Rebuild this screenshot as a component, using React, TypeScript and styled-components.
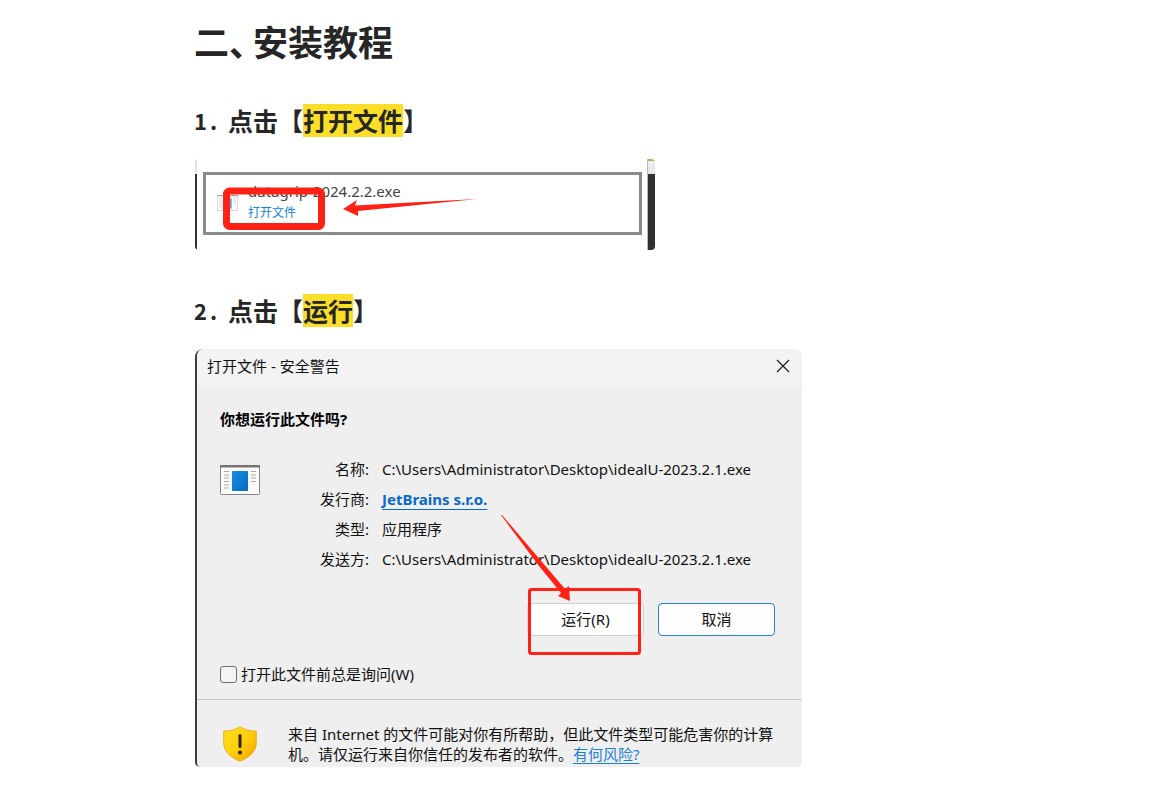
import React from "react";
import styled, { createGlobalStyle } from "styled-components";

const GlobalStyle = createGlobalStyle`
  *, *::before, *::after { box-sizing: border-box; }
  body {
    margin: 0;
    background: #fff;
    color: #262626;
    font-family: "Noto Sans CJK SC", sans-serif;
  }
`;

const uiFont = `"Noto Sans", "Noto Sans CJK SC", sans-serif`;
const red = "#ff2115";

const Article = styled.main`
  max-width: 773px;
  margin: 0 auto;
  padding: 20px 0 28px;
`;

const Title = styled.h1`
  display: flex;
  margin: 0 0 43px;
  font-size: 35px;
  line-height: 41px;
  font-weight: 700;
`;

const TitleMark = styled.span`
  width: 24px;
  font-feature-settings: "halt";
`;

const Step = styled.h2`
  display: flex;
  margin: 0 0 22px;
  font-size: 25px;
  line-height: 33px;
  font-weight: 700;
`;

const StepNumber = styled.span`
  display: flex;
  gap: 3px;
  width: 34px;
  font-size: 22px;
`;

const Highlight = styled.mark`
  display: inline-block;
  color: inherit;
  background: #fbde28;
`;

const Figure = styled.figure`
  margin: 0 0 44px;
  padding-left: 1px;

  &:last-child {
    margin-bottom: 0;
  }
`;

const Overlay = styled.svg`
  position: absolute;
  overflow: visible;
  pointer-events: none;
`;

const Download = styled.div`
  display: flex;
  justify-content: space-between;
  max-width: 460px;
  height: 91px;
  border-radius: 4px;
  overflow: hidden;
`;

const Edge = styled.div<{ $wide?: boolean }>`
  flex: none;
  width: ${(p) => (p.$wide ? 8 : 2)}px;
  background: linear-gradient(${(p) => (p.$wide ? "#c9a94e 2px, #eee 2px" : "#ddd 0")}, #e4e4e4 15px, #303030 15px);
  border-left: ${(p) => (p.$wide ? "1px solid #bbb" : "0")};
`;

const DownloadItem = styled.div`
  position: relative;
  flex: 1;
  display: flex;
  gap: 10px;
  margin: 13px 5px 15px 6px;
  padding: 6px 11px;
  border: 3px solid #8a8a8a;
`;

const FileIconBox = styled.div`
  flex: none;
  width: 21px;
  padding-top: 14px;
  line-height: 0;
`;

const FileText = styled.div`
  display: flex;
  flex-direction: column;
  align-items: flex-start;
  gap: 2px;
  font-family: ${uiFont};
`;

const FileName = styled.span`
  font-size: 15px;
  line-height: 20px;
  color: #444;
`;

const OpenLink = styled.a`
  font-size: 12px;
  line-height: 20px;
  color: #1583d8;
  text-decoration: none;
`;

const Dialog = styled.section`
  max-width: 607px;
  border-left: 2px solid #3c3c3c;
  border-radius: 8px 8px 5px 5px;
  background: #efefef;
  color: #111;
  overflow: hidden;
  font-family: ${uiFont};
  font-size: 15px;
  line-height: 20px;
`;

const TitleBar = styled.header`
  display: flex;
  align-items: center;
  justify-content: space-between;
  height: 37px;
  padding: 0 12px 4px 10px;
  background: #f3f3f3;
`;

const CloseButton = styled.button`
  padding: 0;
  border: 0;
  background: none;
  width: 14px;
  height: 14px;
  line-height: 0;
`;

const DialogBody = styled.div`
  padding: 23px 27px 15px 23px;
`;

const Question = styled.p`
  margin: 0 0 25px;
  font-weight: 700;
  color: #000;
`;

const Info = styled.div`
  display: flex;
  align-items: flex-start;
`;

const AppIconBox = styled.div`
  flex: none;
  width: 100px;
  padding-top: 11px;
  line-height: 0;
`;

const Details = styled.dl`
  display: grid;
  grid-template-columns: 49px 1fr;
  column-gap: 13px;
  row-gap: 10px;
  margin: 0;
  padding-top: 5px;
`;

const Term = styled.dt`
  text-align: right;
  white-space: nowrap;
`;

const Value = styled.dd`
  margin: 0;
`;

const Publisher = styled.a`
  font-weight: 700;
  color: #0a68c8;
  text-decoration: underline;
  text-decoration-thickness: 1px;
  text-underline-offset: 4px;
`;

const Actions = styled.div`
  display: flex;
  justify-content: flex-end;
  gap: 14px;
  margin: 34px 0 28px;
`;

const ActionSlot = styled.div`
  position: relative;
`;

const ActionButton = styled.button<{ $primary?: boolean }>`
  width: 117px;
  height: 33px;
  padding: 0 0 2px;
  border: 1px solid ${(p) => (p.$primary ? "#2484cc" : "#d2d2d2")};
  border-radius: 4px;
  background: #fdfdfd;
  color: #111;
  font: inherit;
`;

const AskLabel = styled.label`
  display: flex;
  align-items: center;
  gap: 4px;
`;

const Checkbox = styled.input`
  appearance: none;
  width: 17px;
  height: 17px;
  margin: 0;
  border: 1px solid #6f6f6f;
  border-radius: 3px;
  background: #f4f4f4;
`;

const Warning = styled.footer`
  display: flex;
  gap: 31px;
  padding: 24px 20px 3px 26px;
  border-top: 1px solid #c6c6c6;
`;

const ShieldBox = styled.div`
  flex: none;
  width: 34px;
  padding-top: 2px;
  line-height: 0;
`;

const WarningText = styled.p`
  margin: 0;
`;

const RiskLink = styled.a`
  color: #1b7fd6;
  text-underline-offset: 3px;
`;

function AppIcon({ width, faded }: { width: number; faded?: boolean }) {
  return (
    <svg width={width} height={width * 0.75} viewBox="0 0 40 30" opacity={faded ? 0.65 : 1} aria-hidden="true">
      <defs>
        <linearGradient id="pane" x1="0" y1="0" x2="1" y2="1">
          <stop offset="0" stopColor="#1590e4" />
          <stop offset="1" stopColor="#0868bd" />
        </linearGradient>
      </defs>
      <rect x="0.5" y="0.5" width="39" height="29" rx="1" fill="#fafafa" stroke="#858585" />
      <path d="M0 1.2H40" stroke="#747474" strokeWidth="2.4" />
      <path d="M4 6.5H9M4 10H9M4 13H9M4 16.500H9M4 20H9M4 23H9M31 6.500H36M31 10H36M31 13H36M31 16.500H36" stroke="#aaa" />
      <rect x="12" y="6" width="16" height="20" rx="1" fill="url(#pane)" />
    </svg>
  );
}

function Shield() {
  return (
    <svg width="34" height="36" viewBox="0 0 34 36" aria-hidden="true">
      <defs>
        <linearGradient id="shield" x1="0" y1="0" x2="1" y2="1">
          <stop offset="0" stopColor="#ffe11c" />
          <stop offset="0.5" stopColor="#ffcf0a" />
          <stop offset="1" stopColor="#f2a300" />
        </linearGradient>
      </defs>
      <path
        d="M17 0.700C21 3.800 27 5.200 33.300 5V17C33.300 25.500 26 31.800 17 35.200C8 31.800 0.700 25.500 0.700 17V5C7 5.200 13 3.800 17 0.700Z"
        fill="url(#shield)"
        stroke="#dfa414"
        strokeWidth="0.8"
      />
      <path d="M17 9.500V20.500" stroke="#2b2614" strokeWidth="3" strokeLinecap="round" />
      <circle cx="17" cy="26.500" r="2" fill="#2b2614" />
    </svg>
  );
}

const filePath = "C:\\Users\\Administrator\\Desktop\\idealU-2023.2.1.exe";

export default function App() {
  return (
    <>
      <GlobalStyle />
      <Article>
        <Title>
          <span>二</span>
          <TitleMark>、</TitleMark>
          <span>安装教程</span>
        </Title>

        <Step>
          <StepNumber>
            <span>1</span>
            <span>.</span>
          </StepNumber>
          <span>点击【<Highlight>打开文件</Highlight>】</span>
        </Step>
        <Figure>
          <Download>
            <Edge />
            <DownloadItem>
              <FileIconBox>
                <AppIcon width={21} faded />
              </FileIconBox>
              <FileText>
                <FileName>datagrip-2024.2.2.exe</FileName>
                <OpenLink href="#open">打开文件</OpenLink>
              </FileText>
              <Overlay width="260" height="48" style={{ left: 17, top: 12 }} aria-hidden="true">
                <rect x="3.500" y="4" width="95" height="35.500" rx="3" fill="none" stroke={red} strokeWidth="7" />
                <path d="M120 22L134 13L132 18.500L254 12L135 24L135 29Z" fill={red} />
              </Overlay>
            </DownloadItem>
            <Edge $wide />
          </Download>
        </Figure>

        <Step>
          <StepNumber>
            <span>2</span>
            <span>.</span>
          </StepNumber>
          <span>点击【<Highlight>运行</Highlight>】</span>
        </Step>
        <Figure>
          <Dialog aria-label="打开文件 - 安全警告">
            <TitleBar>
              <span>打开文件 - 安全警告</span>
              <CloseButton type="button" aria-label="关闭">
                <svg width="14" height="14" viewBox="0 0 14 14">
                  <path d="M1 1L13 13M13 1L1 13" stroke="#222" strokeWidth="1.300" />
                </svg>
              </CloseButton>
            </TitleBar>
            <DialogBody>
              <Question>你想运行此文件吗?</Question>
              <Info>
                <AppIconBox>
                  <AppIcon width={40} />
                </AppIconBox>
                <Details>
                  <Term>名称:</Term>
                  <Value>{filePath}</Value>
                  <Term>发行商:</Term>
                  <Value>
                    <Publisher href="#publisher">JetBrains s.r.o.</Publisher>
                  </Value>
                  <Term>类型:</Term>
                  <Value>应用程序</Value>
                  <Term>发送方:</Term>
                  <Value>{filePath}</Value>
                </Details>
              </Info>
              <Actions>
                <ActionSlot>
                  <ActionButton type="button">运行(R)</ActionButton>
                  <Overlay width="117" height="33" style={{ left: 0, top: 0 }} aria-hidden="true">
                    <rect x="2.500" y="-13.500" width="110" height="64" rx="2" fill="none" stroke={red} strokeWidth="3" />
                    <path d="M-26 -88L-25 -88L38 -14L42 -17L43 -2L31 -7L34 -10L12 -37Z" fill={red} />
                  </Overlay>
                </ActionSlot>
                <ActionButton type="button" $primary>
                  取消
                </ActionButton>
              </Actions>
              <AskLabel>
                <Checkbox type="checkbox" />
                打开此文件前总是询问(W)
              </AskLabel>
            </DialogBody>
            <Warning>
              <ShieldBox>
                <Shield />
              </ShieldBox>
              <WarningText>
                来自 Internet 的文件可能对你有所帮助，但此文件类型可能危害你的计算
                <br />
                机。请仅运行来自你信任的发布者的软件。<RiskLink href="#risk">有何风险?</RiskLink>
              </WarningText>
            </Warning>
          </Dialog>
        </Figure>
      </Article>
    </>
  );
}
